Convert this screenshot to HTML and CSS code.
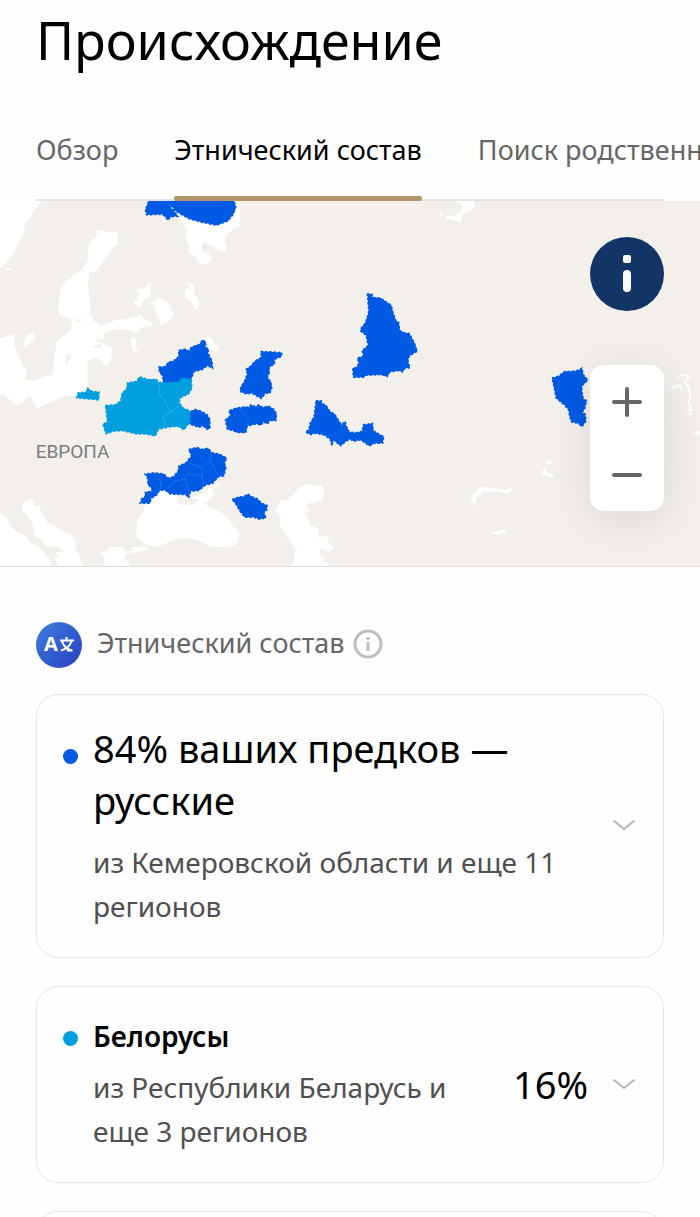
FILE: index.html
```
<!DOCTYPE html>
<html lang="ru">
<head>
    <meta charset="UTF-8">
    <meta name="viewport" content="width=device-width, initial-scale=1.0">
    <title>Происхождение</title>
    <link rel="stylesheet" href="styles.css">
</head>
<body>
    <div class="page">
        <h1>Происхождение</h1>
        <nav class="tabs">
            <a class="tab" href="#overview">Обзор</a>
            <a class="tab active" href="#ethnicity">Этнический состав</a>
            <a class="tab" href="#relatives">Поиск родственников</a>
        </nav>

        <div class="map">
            <svg class="map-canvas" viewBox="0 0 2100 1095" preserveAspectRatio="xMidYMid slice" aria-hidden="true">
                <!-- моря и озера -->
                <g class="water">
                    <g transform="translate(0 -18)">
                        <path d="M0 0H112L122 18 112 38 98 54 92 68 76 88 72 112 64 132 52 150 44 168 34 184 20 198 12 214 0 219ZM16 220L32 218 32 226 18 227ZM124 20L134 22 130 27Z"/>
                        <path d="M290 106L334 112 350 112 356 146 344 154 320 186 294 222 286 232 268 232 264 272 270 320 272 344 266 354 278 364 280 378 302 392 346 376 376 372 406 364 424 358 430 372 444 378 458 384 456 391 426 396 410 413 388 406 360 402 330 404 312 416 312 430 300 440 316 450 336 458 334 494 318 514 296 492 282 488 262 498 262 600 90 600 112 552 138 542 158 540 164 480 170 440 212 404 216 384 208 372 176 356 176 318 182 280 202 256 244 224 262 200 266 184 264 158 272 140 290 124Z"/>
                        <path d="M0 430L26 424 30 416 44 424 42 450 50 474 62 498 66 514 82 524 74 556 64 566 74 600H0V502L6 504 22 488 36 510 26 540 34 572 20 580 0 590ZM84 414L104 412 104 428 98 440 86 446 80 458 68 452 76 432Z"/>
                        <path d="M510 30L522 36 536 60 566 74 600 86 650 92 684 80 704 60 710 18 720 18 720 92 700 102 676 122 674 144 682 156 676 172 644 160 630 150 612 142 604 152 608 168 630 178 634 196 614 209 600 206 586 184 568 176 566 150 556 126 562 104 546 80 520 62Z"/>
                        <path d="M442 264L456 268 450 282 454 298 444 310 426 320 426 332 414 338 400 324 402 318 416 314 412 304 426 298 408 292 412 280 434 282ZM478 306L510 330 514 346 524 354 516 372 500 380 484 392 472 360 462 330 452 324ZM558 252L568 264 580 266 584 296 598 324 594 338 584 346 576 320 556 310 554 290 562 280 572 292ZM390 430L408 430 410 442 404 454 414 472 406 475 396 460ZM620 426L638 432 642 444 654 452 652 466 640 468 624 450Z"/>
                    </g>
                    <g transform="translate(0 537)">
                        <path d="M0 0H264L262 24 240 30 232 50 196 48 164 62 140 72 114 84 104 74 92 50 78 54 66 70 40 76 36 62 14 50 20 34 10 20 8 0Z"/>
                        <path d="M68 370L98 354 104 380 120 376 122 396 142 426 174 446 184 454 206 460 228 478 226 504 238 526 244 552 260 570 182 570 164 536 176 530 164 516 190 516 172 500 144 500 130 486 102 464 100 430 82 408 68 394Z"/>
                        <path d="M0 398L20 410 30 438 48 454 76 468 98 492 118 504 148 534 152 560 0 560ZM298 516L328 514 324 502 366 500 376 516 402 510 396 502 440 500 444 508 424 514 382 520 374 526 372 540 388 544 386 560 308 560 316 540Z"/>
                        <path d="M484 330L510 342 536 352 532 370 550 376 602 372 620 374 678 406 700 440 716 456 716 484 694 502 634 500 600 484 570 474 528 478 500 490 470 500 434 492 408 470 412 420 430 398 432 380 452 366Z"/>
                        <path d="M568 354L600 344 634 320 656 308 660 314 634 328 642 344 632 358 606 374 580 370 598 360Z"/>
                    </g>
                    <g transform="translate(600 717)">
                        <path d="M300 142L320 132 346 138 366 136 373 154 366 178 346 190 322 190 320 204 334 214 312 214 322 232 328 256 344 262 356 270 356 292 372 286 384 294 386 308 404 322 388 334 360 326 360 346 374 352 370 364 384 370 384 380 270 380 282 366 286 340 292 334 264 296 240 260 242 232 226 214 242 182 268 178 280 162Z"/>
                    </g>
                    <g transform="translate(1290 -18)">
                        <path d="M76 18H134V38L118 46 102 56 92 82 62 72 46 74 48 64 72 62 92 48 98 30ZM30 52L38 54 38 66 32 66Z"/>
                    </g>
                    <g transform="translate(1290 477)">
                        <path d="M122 416L130 400 152 382 188 384 216 390 232 388 248 380 248 390 232 402 210 394 160 396 154 406 140 412 136 440ZM180 518L226 508 230 516 206 526ZM354 300L368 304 360 314 346 312ZM346 320L350 336 370 346 370 356 348 348 334 340ZM788 218L812 212V228Z"/>
                        <path class="shore" d="M724 84L750 76 758 90M740 56L752 46 770 46 778 56 764 62 776 84 782 104 776 128 784 148M768 150L790 150M780 150L782 166"/>
                    </g>
                </g>

                <!-- острова -->
                <g class="land" transform="translate(0 -18)">
                    <path d="M230 372L244 372 240 382 230 380ZM288 434L302 430 304 440 290 440ZM280 452L304 446 306 456 284 458ZM198 482L214 474 210 494 196 514Z"/>
                </g>

                <!-- регионы: русские -->
                <g class="region-ru">
                    <g transform="translate(0 -18)">
                        <path d="M446 18H702L708 36 700 58 684 78 650 91 606 82 568 72 540 56 526 48 514 32 508 32 524 50 534 64 512 66 504 76 494 64 486 58 440 60 436 44Z"/>
                        <path d="M476 516L496 514 504 502 520 498 536 484 536 466 556 462 566 468 574 456 598 448 608 434 618 442 616 456 626 462 624 474 636 496 638 520 622 512 606 524 582 530 574 552 560 566 490 566 488 544 478 530Z"/>
                    </g>
                    <g transform="translate(420 387)">
                        <path d="M152 244L166 238 184 244 202 254 210 268 210 296 200 298 190 288 176 292 148 282 150 262Z"/>
                        <path d="M146 358L172 352 184 358 204 354 216 368 238 372 260 384 254 400 258 412 252 438 236 440 218 460 196 466 176 482 152 484 146 504 138 494 90 492 74 480 58 482 50 496 34 504 30 520 0 520 6 504 14 502 16 486 34 484 36 476 24 464 22 442 14 432 44 428 72 432 84 444 100 440 114 424 116 408 138 398 154 378Z"/>
                        <path d="M362 64L400 66 426 68 424 80 404 88 404 102 388 112 388 130 382 142 392 154 396 172 390 190 376 190 364 206 336 190 318 192 300 184 302 172 314 152 322 132 318 118 332 108 346 92 364 82Z"/>
                        <path d="M256 270L272 256 266 242 288 234 316 230 328 232 332 224 348 230 356 224 368 232 386 228 402 238 410 252 408 272 388 272 384 282 370 276 364 286 348 282 322 288 318 308 292 308 280 302 262 298Z"/>
                        <path d="M276 508L298 500 310 500 324 492 336 500 352 506 366 520 382 526 380 542 372 546 378 564 358 568 342 562 314 562 300 544 290 526Z"/>
                    </g>
                    <g transform="translate(870 237)">
                        <path d="M232 42L246 42 248 52 272 54 304 76 310 100 318 122 326 126 330 152 344 158 358 160 374 190 382 214 358 228 354 244 360 264 346 264 338 276 326 272 300 276 292 290 272 284 228 286 222 292 190 292 188 264 200 262 206 250 202 234 220 228 216 212 234 196 228 166 212 154 212 146 226 128 236 96Z"/>
                        <path d="M78 362L94 362 96 370 108 376 120 394 134 402 148 424 154 434 166 424 168 436 178 456 196 458 216 454 220 434 248 430 250 452 282 470 278 490 254 490 238 498 224 488 212 480 192 484 180 478 168 484 152 498 130 480 126 498 120 478 104 466 88 462 74 460 62 464 46 456 56 450 60 430 72 410Z"/>
                    </g>
                    <g transform="translate(1290 477)">
                        <path d="M366 54L386 48 404 34 424 34 440 32 456 24 460 44 474 60 456 78 456 96 460 116 470 122 464 148 456 158 466 162 468 184 456 200 444 190 424 186 418 166 416 150 404 136 378 114 374 92Z"/>
                    </g>
                </g>

                <!-- регионы: белорусы -->
                <g class="region-by" transform="translate(0 537)">
                    <path d="M230 54L234 38 258 36 262 24 276 34 298 36 296 60Z"/>
                    <path d="M316 76L346 74 362 62 366 40 380 26 382 8 410 4 418 -10 444 -2 470 -2 474 6 490 8 536 6 546 -6 574 -2 576 24 566 42 540 54 538 68 550 84 570 92 570 126 552 150 536 140 520 140 504 142 476 148 466 168 436 162 410 162 366 152 340 154 318 162 308 132 322 126Z"/>
                </g>

                <!-- границы внутри регионов -->
                <g class="border-by" transform="translate(420 387)">
                    <path d="M52 158L60 172 58 192 74 212 84 232 94 246 106 238 120 214M94 246L68 258 74 282 72 294"/>
                </g>
                <g class="border-ru" transform="translate(420 387)">
                    <path d="M214 366L212 394 194 404 186 412 160 404 146 398M212 394L222 414 236 438M186 412L186 438 192 466M186 438L142 430 136 448 106 452 96 466 80 472M136 448L144 476 148 492M44 430L60 452 64 476M300 234L314 258 326 270 320 288"/>
                </g>

                <text class="map-label" x="107" y="770">ЕВРОПА</text>
            </svg>
            <div class="map-controls">
                <button class="map-info" type="button" aria-label="Информация">
                    <svg width="74" height="74" viewBox="0 0 74 74"><rect x="33" y="18" width="8" height="8" rx="2"/><rect x="33" y="33" width="8" height="22" rx="4"/></svg>
                </button>
                <div class="zoom">
                    <button class="zoom-button" type="button" aria-label="Приблизить">
                        <svg width="30" height="30" viewBox="0 0 30 30"><path d="M2 15H28M15 2V28"/></svg>
                    </button>
                    <button class="zoom-button" type="button" aria-label="Отдалить">
                        <svg width="30" height="30" viewBox="0 0 30 30"><path d="M2 15H28"/></svg>
                    </button>
                </div>
            </div>
        </div>

        <main class="content">
            <div class="section-title">
                <svg class="section-icon" width="46" height="46" viewBox="0 0 46 46" aria-hidden="true">
                    <defs>
                        <linearGradient id="badge" x1="0" y1="0" x2="1" y2="1">
                            <stop offset="0" stop-color="#3f7ddc"/>
                            <stop offset="1" stop-color="#2740c4"/>
                        </linearGradient>
                    </defs>
                    <circle cx="23" cy="23" r="23" fill="url(#badge)"/>
                    <text x="8" y="29">A</text>
                    <path d="M24 18.500H38M30.500 15V18M26 19C27 23 30 27 36 28.500M35.500 19C34 24 31 27 25 28.500M31 28.500H36.500"/>
                </svg>
                <h2>Этнический состав</h2>
                <button class="hint" type="button" aria-label="Подробнее">
                    <svg width="30" height="30" viewBox="0 0 30 30"><circle cx="15" cy="15" r="13"/><path d="M15 13V22M15 8V11"/></svg>
                </button>
            </div>

            <article class="card">
                <span class="dot dot-ru"></span>
                <div class="card-text">
                    <h3 class="card-lead">84% ваших предков — русские</h3>
                    <p>из Кемеровской области и еще 11 регионов</p>
                </div>
                <button class="toggle" type="button" aria-label="Развернуть">
                    <svg width="24" height="12" viewBox="0 0 24 12"><path d="M2 2L12 10 22 2"/></svg>
                </button>
            </article>

            <article class="card">
                <span class="dot dot-by"></span>
                <div class="card-text">
                    <h3>Белорусы</h3>
                    <p>из Республики Беларусь и еще 3 регионов</p>
                </div>
                <span class="percent">16%</span>
                <button class="toggle" type="button" aria-label="Развернуть">
                    <svg width="24" height="12" viewBox="0 0 24 12"><path d="M2 2L12 10 22 2"/></svg>
                </button>
            </article>

            <article class="card"></article>
        </main>
    </div>
</body>
</html>
```
FILE: styles.css
```
* {
    box-sizing: border-box;
}
body {
    margin: 0;
    font-family: "Noto Sans", sans-serif;
    font-size: 28px;
    color: #000;
    background-color: #fefefe;
}
h1, h2, h3, p {
    margin: 0;
    font-weight: normal;
}
button {
    display: flex;
    align-items: center;
    justify-content: center;
    padding: 0;
    border: none;
    background: none;
    cursor: pointer;
}
.page {
    height: 100vh;
    overflow: hidden;
}
h1 {
    padding: 4px 36px 0;
    font-size: 52px;
    line-height: 72px;
}
.tabs {
    display: flex;
    gap: 56px;
    height: 77px;
    margin: 48px 36px 0;
    border-bottom: 2px solid #e2e2e2;
    font-size: 27px;
    white-space: nowrap;
}
.tab {
    flex: none;
    height: 77px;
    padding-top: 4px;
    line-height: 44px;
    color: #666;
    text-decoration: none;
}
.tab.active {
    position: relative;
    color: #000;
}
.tab.active::after {
    content: "";
    position: absolute;
    z-index: 1;
    left: 0;
    right: 0;
    bottom: 0;
    height: 5px;
    border-radius: 2px;
    background-color: #b3986a;
}

/* Карта */
.map {
    position: relative;
    height: 366px;
    border-bottom: 1px solid #dcdcdc;
    background-color: #f3f0eb;
    overflow: hidden;
}
.map-canvas {
    display: block;
    width: 100%;
    height: 100%;
}
.water {
    fill: #fff;
}
.land {
    fill: #f3f0eb;
}
.shore {
    fill: none;
    stroke: #fff;
    stroke-width: 6;
}
.region-ru {
    fill: #005ae4;
    stroke: #005ae4;
    stroke-width: 4;
    stroke-dasharray: 7 6;
}
.region-by {
    fill: #019fde;
    stroke: #019fde;
    stroke-width: 4;
    stroke-dasharray: 7 6;
}
.border-ru, .border-by {
    fill: none;
    stroke-width: 2;
}
.border-ru {
    stroke: #2f7bec;
}
.border-by {
    stroke: #3fb8e8;
}
.map-label {
    font-family: Roboto, sans-serif;
    font-size: 57px;
    fill: #7d7d7d;
}
.map-controls {
    position: absolute;
    top: 36px;
    right: 36px;
}
.map-info {
    width: 74px;
    height: 74px;
    border-radius: 50%;
    background-color: #133566;
    fill: #fff;
}
.zoom {
    width: 74px;
    margin-top: 54px;
    border-radius: 14px;
    background-color: #fff;
    box-shadow: 0 8px 48px rgba(0, 0, 0, 0.1);
}
.zoom-button {
    width: 74px;
    height: 73px;
}
.zoom-button path {
    stroke: #666;
    stroke-width: 4;
    stroke-linecap: round;
}

/* Список */
.content {
    padding: 55px 36px 0;
}
.section-title {
    display: flex;
    align-items: center;
    height: 46px;
    margin-bottom: 26px;
}
.section-icon {
    margin-right: 15px;
}
.section-icon text {
    font-size: 20px;
    font-weight: bold;
    fill: #fff;
}
.section-icon path {
    fill: none;
    stroke: #fff;
    stroke-width: 2;
}
h2 {
    padding-bottom: 4px;
    font-size: 27px;
    line-height: 44px;
    color: #666;
}
.hint {
    margin: 0 0 2px 8px;
}
.hint circle, .hint path {
    fill: none;
    stroke: #bdbdbd;
    stroke-width: 3;
}
.card {
    display: flex;
    align-items: center;
    min-height: 120px;
    margin-bottom: 28px;
    padding: 27px 27px 29px 26px;
    border: 1px solid #e6e6e6;
    border-radius: 22px;
}
.dot {
    flex: none;
    align-self: flex-start;
    width: 15px;
    height: 15px;
    margin: 17px 15px 0 0;
    border-radius: 50%;
}
.dot-ru {
    margin-top: 27px;
    background-color: #005ae4;
}
.dot-by {
    background-color: #019fde;
}
.card-text {
    flex: 1;
}
.card-text h3 {
    font-size: 28px;
    font-weight: 600;
    line-height: 44px;
}
.card-text .card-lead {
    font-size: 38px;
    font-weight: normal;
    line-height: 52px;
}
.card-text p {
    margin-top: 7px;
    line-height: 44px;
    color: #505050;
}
.card-text .card-lead + p {
    margin-top: 14px;
}
.percent {
    margin: 0 24px;
    font-size: 38px;
    line-height: 52px;
}
.toggle path {
    fill: none;
    stroke: #b4b4b4;
    stroke-width: 2;
    stroke-linecap: round;
    stroke-linejoin: round;
}
```
